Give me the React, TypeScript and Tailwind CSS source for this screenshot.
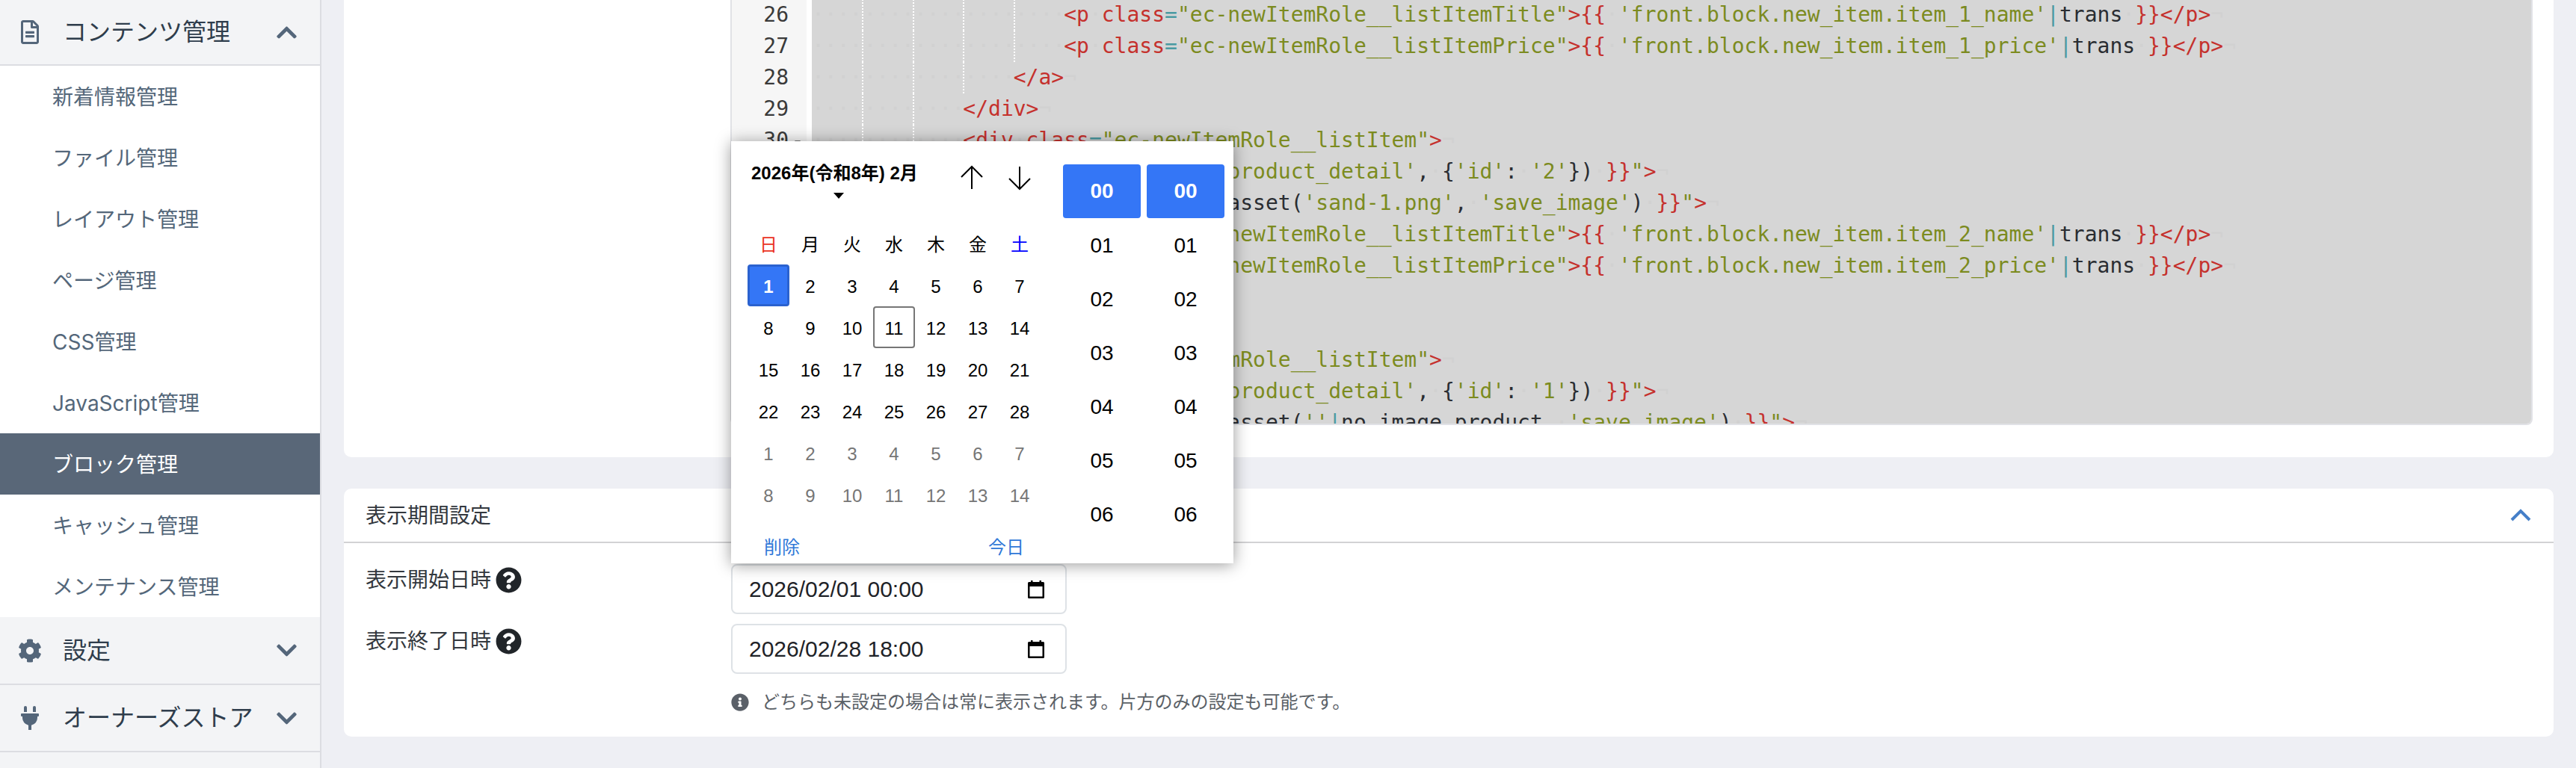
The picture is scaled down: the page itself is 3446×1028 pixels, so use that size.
import React from "react";
import {
  FaChevronDown,
  FaChevronUp,
  FaCog,
  FaInfoCircle,
  FaPlug,
  FaQuestionCircle,
  FaRegFileAlt,
} from "react-icons/fa";

type Tone = "r" | "g" | "t" | "d";
type Token = [Tone, string];

const toneClass: Record<Tone, string> = {
  r: "text-[#c5312d]",
  g: "text-[#7c8b1f]",
  t: "text-[#4a9aa2]",
  d: "text-[#2a2d32]",
};

const sideItems = [
  "新着情報管理",
  "ファイル管理",
  "レイアウト管理",
  "ページ管理",
  "CSS管理",
  "JavaScript管理",
  "ブロック管理",
  "キャッシュ管理",
  "メンテナンス管理",
];

const pTag = (kind: string, key: string): Token[] => [
  ["r", "<p class"],
  ["t", "="],
  ["g", `"ec-newItemRole__listItem${kind}"`],
  ["r", ">{{ "],
  ["g", `'front.block.new_item.${key}'`],
  ["t", "|"],
  ["d", "trans"],
  ["r", " }}</p>"],
];

const itemDiv: Token[] = [
  ["r", "<div class"],
  ["t", "="],
  ["g", '"ec-newItemRole__listItem"'],
  ["r", ">"],
];

const anchor = (id: string): Token[] => [
  ["r", "<a href"],
  ["t", "="],
  ["g", '"'],
  ["r", "{{ "],
  ["d", "url("],
  ["g", "'product_detail'"],
  ["d", ", {"],
  ["g", "'id'"],
  ["d", ": "],
  ["g", `'${id}'`],
  ["d", "}) "],
  ["r", "}}"],
  ["g", '"'],
  ["r", ">"],
];

const codeLines: { no: number; indent: number; tokens: Token[] }[] = [
  { no: 26, indent: 20, tokens: pTag("Title", "item_1_name") },
  { no: 27, indent: 20, tokens: pTag("Price", "item_1_price") },
  { no: 28, indent: 16, tokens: [["r", "</a>"]] },
  { no: 29, indent: 12, tokens: [["r", "</div>"]] },
  { no: 30, indent: 12, tokens: itemDiv },
  { no: 31, indent: 16, tokens: anchor("2") },
  {
    no: 32,
    indent: 20,
    tokens: [
      ["r", "<img src"],
      ["t", "="],
      ["g", '"'],
      ["r", "{{ "],
      ["d", "asset("],
      ["g", "'sand-1.png'"],
      ["d", ", "],
      ["g", "'save_image'"],
      ["d", ") "],
      ["r", "}}"],
      ["g", '"'],
      ["r", ">"],
    ],
  },
  { no: 33, indent: 20, tokens: pTag("Title", "item_2_name") },
  { no: 34, indent: 20, tokens: pTag("Price", "item_2_price") },
  { no: 35, indent: 16, tokens: [["r", "</a>"]] },
  { no: 36, indent: 12, tokens: [["r", "</div>"]] },
  { no: 37, indent: 12, tokens: itemDiv },
  { no: 38, indent: 16, tokens: anchor("1") },
  {
    no: 39,
    indent: 20,
    tokens: [
      ["r", "<img src"],
      ["t", "="],
      ["g", '"'],
      ["r", "{{ "],
      ["d", "asset("],
      ["g", "''"],
      ["t", "|"],
      ["d", "no_image_product, "],
      ["g", "'save_image'"],
      ["d", ") "],
      ["r", "}}"],
      ["g", '"'],
      ["r", ">"],
    ],
  },
];

const Faint = ({ children }: { children: string }) => (
  <span className="text-[#d1d1d1]">{children}</span>
);

const CodeLine = ({ indent, tokens }: { indent: number; tokens: Token[] }) => (
  <div className="h-[42px] leading-[42px] whitespace-pre">
    {Array.from({ length: indent / 4 }).map((_, i) => (
      <span
        key={i}
        className={`inline-block w-[67.44px] h-[42px] align-top ${
          i > 0 ? "border-l-2 border-dotted border-white" : ""
        }`}
      >
        <Faint>····</Faint>
      </span>
    ))}
    {tokens.map(([tone, text], i) => (
      <span key={i} className={toneClass[tone]}>
        {text.split(/( )/).map((part, j) =>
          part === " " ? <Faint key={j}>·</Faint> : part
        )}
      </span>
    ))}
    <Faint>¬</Faint>
  </div>
);

const SideHeader = ({
  icon,
  label,
  open,
  height,
}: {
  icon: React.ReactNode;
  label: string;
  open?: boolean;
  height: string;
}) => (
  <div
    className={`flex items-center bg-[#f3f4f6] border-b-2 border-[#dcdde2] ${height}`}
  >
    <span className="w-[80px] flex justify-center text-[#54667a]">{icon}</span>
    <span className="ml-[4px] flex-1 text-[32px] text-[#2f3d4c]">{label}</span>
    <span className="mr-[29px] text-[#54667a]">
      {open ? <FaChevronUp size={31} /> : <FaChevronDown size={31} />}
    </span>
  </div>
);

const Sidebar = () => (
  <aside className="w-[430px] shrink-0 h-full bg-[#f3f4f6] border-r-2 border-[#dcdde2]">
    <SideHeader
      icon={<FaRegFileAlt size={32} />}
      label="コンテンツ管理"
      open
      height="h-[88px]"
    />
    <div className="bg-white h-[738px]">
      {sideItems.map((item) => (
        <div
          key={item}
          className={`h-[82px] flex items-center pl-[70px] pt-[2px] text-[28px] ${
            item === "ブロック管理" ? "bg-[#596778] text-white" : "text-[#54677a]"
          }`}
        >
          {item}
        </div>
      ))}
    </div>
    <SideHeader icon={<FaCog size={32} />} label="設定" height="h-[91px]" />
    <SideHeader icon={<FaPlug size={32} />} label="オーナーズストア" height="h-[90px]" />
  </aside>
);

const CodeEditor = () => (
  <div className="ml-[517px] mr-[28px] h-[569px] flex overflow-hidden bg-white border-x-2 border-b-2 border-[#e1e2e6] rounded-b-[8px] font-['DejaVu_Sans_Mono',monospace] text-[28px]">
    <div className="w-[100px] shrink-0 bg-[#f6f6f6] -mt-px text-[#3a3a3a]">
      {codeLines.map((l) => (
        <div key={l.no} className="h-[42px] leading-[42px] flex justify-end">
          <span>{l.no}</span>
          <span className="w-[24px] flex justify-center items-center">
            {l.no === 30 && (
              <span className="mt-[6px] w-0 h-0 border-x-[4px] border-x-transparent border-t-[6px] border-t-[#777]" />
            )}
          </span>
        </div>
      ))}
    </div>
    <div className="w-[9px] shrink-0 bg-white" />
    <div className="flex-1 bg-[#d6d6d6] -mt-px h-[calc(100%+1px)] overflow-hidden -ml-[2px]">
      {codeLines.map((l) => (
        <CodeLine key={l.no} indent={l.indent} tokens={l.tokens} />
      ))}
    </div>
  </div>
);

const CalendarIcon = () => (
  <svg width="22" height="24" viewBox="0 0 22 24" className="shrink-0">
    <path d="M4 0h2.500v3H4zM15.500 0H18v3h-2.500z" fill="#000" />
    <path
      fillRule="evenodd"
      d="M1.500 2h19a1.500 1.500 0 0 1 1.500 1.500v19a1.500 1.500 0 0 1-1.500 1.500h-19A1.500 1.500 0 0 1 0 22.500v-19A1.500 1.500 0 0 1 1.500 2zM2.500 8v13.500h17V8z"
      fill="#000"
    />
  </svg>
);

const DateField = ({ value }: { value: string }) => (
  <div className="w-[449px] h-[67px] flex items-center justify-between pl-[22px] pr-[28px] border-2 border-[#dee2e6] rounded-[8px] bg-white text-[30px] text-[#1f2328] font-['Liberation_Sans','Noto_Sans_CJK_JP',sans-serif]">
    <span>{value}</span>
    <CalendarIcon />
  </div>
);

const FieldLabel = ({ text }: { text: string }) => (
  <div className="h-[82px] flex items-center gap-[6px] text-[28px] text-[#33383e]">
    <span>{text}</span>
    <FaQuestionCircle size={35} className="text-[#212529]" />
  </div>
);

const PeriodCard = () => (
  <section className="h-[332px] bg-white rounded-[10px]">
    <div className="h-[73px] flex items-center justify-between pl-[29px] pr-[30px] border-b-2 border-[#d2d2d4]">
      <span className="text-[28px] text-[#33383e]">表示期間設定</span>
      <svg width="28" height="17" viewBox="0 0 28 17">
        <polyline
          points="2,15 14,3 26,15"
          fill="none"
          stroke="#457fc8"
          strokeWidth="4"
        />
      </svg>
    </div>
    <div className="flex pl-[29px] pt-[6px]">
      <div className="w-[489px] shrink-0 pt-[2px]">
        <FieldLabel text="表示開始日時" />
        <FieldLabel text="表示終了日時" />
      </div>
      <div>
        <div className="h-[22px]" />
        <div className="flex flex-col gap-[13px]">
          <DateField value="2026/02/01 00:00" />
          <DateField value="2026/02/28 18:00" />
        </div>
        <div className="mt-[20px] flex items-center gap-[17px] text-[24px] text-[#5b6167]">
          <FaInfoCircle size={24} className="text-[#5a6068]" />
          <span>どちらも未設定の場合は常に表示されます。片方のみの設定も可能です。</span>
        </div>
      </div>
    </div>
  </section>
);

const weekDays = ["日", "月", "火", "水", "木", "金", "土"];
const febDays = Array.from({ length: 28 }, (_, i) => i + 1);
const marDays = Array.from({ length: 14 }, (_, i) => i + 1);
const hours = ["01", "02", "03", "04", "05", "06"];

const Arrow = ({ down }: { down?: boolean }) => (
  <svg width="32" height="34" viewBox="0 0 32 34" className={down ? "rotate-180" : ""}>
    <path d="M16 32V2M2 16L16 2l14 14" fill="none" stroke="#000" strokeWidth="2" />
  </svg>
);

const TimeColumn = () => (
  <div className="w-[104px]">
    <div className="h-[72px] flex items-center justify-center rounded-[4px] bg-[#3476f6] text-white font-bold">
      00
    </div>
    {hours.map((h) => (
      <div key={h} className="h-[72px] pt-[2px] flex items-center justify-center text-black">
        {h}
      </div>
    ))}
  </div>
);

const DatePopup = () => (
  <div className="absolute left-[978px] top-[189px] w-[672px] h-[565px] flex overflow-hidden bg-white shadow-[0_2px_20px_rgba(0,0,0,0.4)] font-['Liberation_Sans','Noto_Sans_CJK_JP',sans-serif] text-[24px] text-black">
    <div className="w-[444px] shrink-0 pl-[22px]">
      <div className="h-[109px] flex items-start">
        <div className="w-[238px] pl-[5px] pt-[27px] font-bold text-center leading-[32px] whitespace-nowrap">
          <div className="text-left">2026年(令和8年) 2月</div>
          <div className="mx-auto mt-[10px] w-0 h-0 border-x-[7px] border-x-transparent border-t-[8px] border-t-black" />
        </div>
        <div className="ml-[46px] pt-[32px] flex gap-[32px]">
          <Arrow />
          <Arrow down />
        </div>
      </div>
      <div className="grid grid-cols-[repeat(7,56px)] auto-rows-[56px]">
        {weekDays.map((d, i) => (
          <div
            key={d}
            className={`pt-[3px] flex items-center justify-center ${
              i === 0 ? "text-[#ea3323]" : i === 6 ? "text-[#0000ff]" : ""
            }`}
          >
            {d}
          </div>
        ))}
        {febDays.map((d) => (
          <div
            key={d}
            className={`pt-[4px] flex items-center justify-center rounded-[4px] ${
              d === 1
                ? "bg-[#3476f6] border-[3px] border-[#2b62cf] text-white font-bold"
                : d === 11
                  ? "border-2 border-[#767676]"
                  : ""
            }`}
          >
            {d}
          </div>
        ))}
        {marDays.map((d) => (
          <div key={d} className="pt-[4px] flex items-center justify-center text-[#767676]">
            {d}
          </div>
        ))}
      </div>
      <div className="mt-[19px] h-[48px] flex items-center text-[#2f78d8]">
        <span className="ml-[22px] w-[300px]">削除</span>
        <span>今日</span>
      </div>
    </div>
    <div className="pt-[31px] flex gap-[8px] text-[28px]">
      <TimeColumn />
      <TimeColumn />
    </div>
  </div>
);

export default function App() {
  return (
    <div className="relative w-[3446px] h-[1028px] flex overflow-hidden bg-[#eeeff4] font-['Inter','Noto_Sans_CJK_JP',sans-serif]">
      <Sidebar />
      <main className="flex-1 min-w-0 pl-[30px] pr-[30px] flex flex-col gap-[42px]">
        <section className="h-[612px] shrink-0 bg-white rounded-b-[10px]">
          <CodeEditor />
        </section>
        <PeriodCard />
      </main>
      <DatePopup />
    </div>
  );
}
